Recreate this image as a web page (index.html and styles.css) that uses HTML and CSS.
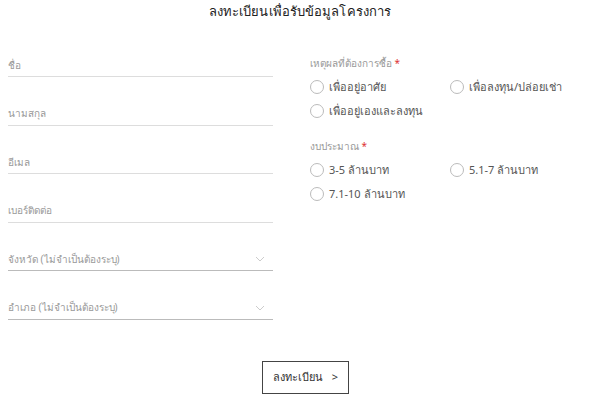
FILE: index.html
```html
<!DOCTYPE html>
<html lang="th">
<head>
  <meta charset="UTF-8">
  <title>ลงทะเบียน</title>
  <link rel="stylesheet" href="styles.css">
</head>
<body>
  <div class="page">
    <h2 class="title">ลงทะเบียนเพื่อรับข้อมูลโครงการ</h2>

    <form class="form">
      <div class="col-left">
        <div class="field"><span>ชื่อ</span></div>
        <div class="field"><span>นามสกุล</span></div>
        <div class="field"><span>อีเมล</span></div>
        <div class="field"><span>เบอร์ติดต่อ</span></div>
        <div class="field select">
          <span>จังหวัด (ไม่จำเป็นต้องระบุ)</span>
          <svg width="10" height="6" viewBox="0 0 10 6"><path d="M1 1l4 4 4-4" fill="none" stroke="#ccc" stroke-width="1"/></svg>
        </div>
        <div class="field select">
          <span>อำเภอ (ไม่จำเป็นต้องระบุ)</span>
          <svg width="10" height="6" viewBox="0 0 10 6"><path d="M1 1l4 4 4-4" fill="none" stroke="#ccc" stroke-width="1"/></svg>
        </div>
      </div>

      <div class="col-right">
        <div class="group">
          <div class="group-label">เหตุผลที่ต้องการซื้อ <b>*</b></div>
          <div class="options">
            <label class="radio"><i></i>เพื่ออยู่อาศัย</label>
            <label class="radio"><i></i>เพื่อลงทุน/ปล่อยเช่า</label>
            <label class="radio"><i></i>เพื่ออยู่เองและลงทุน</label>
          </div>
        </div>
        <div class="group">
          <div class="group-label">งบประมาณ <b>*</b></div>
          <div class="options">
            <label class="radio"><i></i>3-5 ล้านบาท</label>
            <label class="radio"><i></i>5.1-7 ล้านบาท</label>
            <label class="radio"><i></i>7.1-10 ล้านบาท</label>
          </div>
        </div>
      </div>
    </form>

    <div class="actions">
      <button type="button" class="submit">ลงทะเบียน <span class="arrow">&gt;</span></button>
    </div>
  </div>
</body>
</html>
```

FILE: styles.css
```css
body {
  margin: 0;
  font-family: "Noto Sans", "Liberation Sans", sans-serif;
  background-color: #fff;
  color: #333;
}

.page {
  padding: 0 8px;
}

.title {
  margin: 0;
  padding-top: 1px;
  font-size: 13px;
  font-weight: normal;
  letter-spacing: 0.1px;
  text-align: center;
  color: #222;
}

.form {
  display: flex;
  margin-top: 32px;
}

.col-left {
  width: 265px;
}

.field {
  display: flex;
  align-items: center;
  justify-content: space-between;
  height: 22px;
  margin-bottom: 25.6px;
  border-bottom: 1px solid #ddd;
  font-size: 10px;
  color: #999;
}

.field.select {
  border-bottom-color: #bbb;
}

.field.select svg {
  margin-right: 8px;
}

.col-right {
  margin-left: 37px;
  padding-top: 1px;
  flex: 1;
}

.group {
  padding-top: 1px;
  margin-bottom: 18px;
}

.group-label {
  font-size: 10px;
  color: #999;
  margin-bottom: 7px;
}

.group-label b {
  color: #d33;
  font-weight: normal;
}

.options {
  display: grid;
  grid-template-columns: 140px 1fr;
  row-gap: 6px;
}

.radio {
  display: flex;
  align-items: center;
  font-size: 11px;
  color: #555;
  height: 18px;
}

.radio i {
  width: 12px;
  height: 12px;
  border: 1px solid #bbb;
  border-radius: 50%;
  margin-right: 5px;
}

.actions {
  display: flex;
  justify-content: center;
  margin-top: 15px;
  padding-left: 11px;
}

.submit {
  font-family: inherit;
  font-size: 11px;
  color: #333;
  background: #fff;
  border: 1px solid #444;
  padding: 6.5px 10px;
  cursor: pointer;
}

.submit .arrow {
  margin-left: 6px;
}
```
